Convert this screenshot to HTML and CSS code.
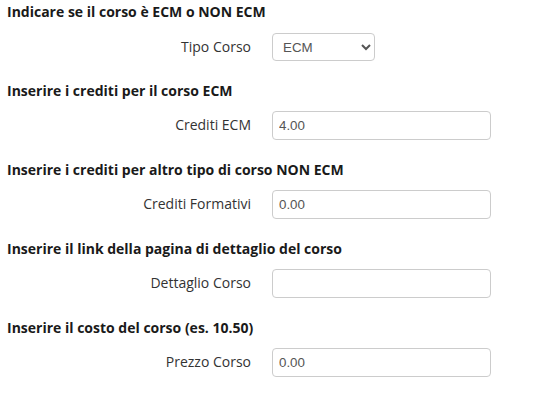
FILE: index.html
```html
<!DOCTYPE html>
<html lang="it">
<head>
<meta charset="utf-8">
<link rel="stylesheet" href="styles.css">
</head>
<body>
<div class="form">
  <section class="group">
    <h4 class="title">Indicare se il corso è ECM o NON ECM</h4>
    <div class="row">
      <label class="label" for="tipo">Tipo Corso</label>
      <select id="tipo" class="control select"><option>ECM</option><option>NON ECM</option></select>
    </div>
  </section>
  <section class="group">
    <h4 class="title">Inserire i crediti per il corso ECM</h4>
    <div class="row">
      <label class="label" for="ecm">Crediti ECM</label>
      <input id="ecm" class="control input" type="text" value="4.00">
    </div>
  </section>
  <section class="group">
    <h4 class="title">Inserire i crediti per altro tipo di corso NON ECM</h4>
    <div class="row">
      <label class="label" for="form">Crediti Formativi</label>
      <input id="form" class="control input" type="text" value="0.00">
    </div>
  </section>
  <section class="group">
    <h4 class="title">Inserire il link della pagina di dettaglio del corso</h4>
    <div class="row">
      <label class="label" for="det">Dettaglio Corso</label>
      <input id="det" class="control input" type="text" value="">
    </div>
  </section>
  <section class="group">
    <h4 class="title">Inserire il costo del corso (es. 10.50)</h4>
    <div class="row">
      <label class="label" for="prezzo">Prezzo Corso</label>
      <input id="prezzo" class="control input" type="text" value="0.00">
    </div>
  </section>
</div>
</body>
</html>
```

FILE: styles.css
```css
html, body {
  margin: 0;
  padding: 0;
  background: #ffffff;
}
body {
  font-family: "Open Sans", "Liberation Sans", sans-serif;
  color: #333333;
}
.form {
  display: flex;
  flex-direction: column;
  gap: 19.9px;
  padding: 2px 0 0 7px;
}
.group {
  display: flex;
  flex-direction: column;
  gap: 10px;
}
.title {
  margin: 0;
  font-size: 14px;
  line-height: 20px;
  font-weight: 700;
  color: #1a1a1a;
}
.row {
  display: grid;
  grid-template-columns: 244px auto;
  column-gap: 21px;
  align-items: center;
  height: 29px;
}
.label {
  text-align: right;
  font-size: 14px;
  line-height: 20px;
  color: #333333;
}
.control {
  box-sizing: border-box;
  font-family: "Liberation Sans", Arial, sans-serif;
  font-size: 13.33px;
  color: #555555;
  border: 1px solid #cccccc;
  border-radius: 4px;
  background: #ffffff;
  margin: 0;
}
.input {
  width: 219px;
  height: 29px;
  padding: 0 6px;
}
.select {
  width: 103px;
  height: 28px;
  padding: 0 6px;
  align-self: start;
  margin-top: 1px;
}
```
